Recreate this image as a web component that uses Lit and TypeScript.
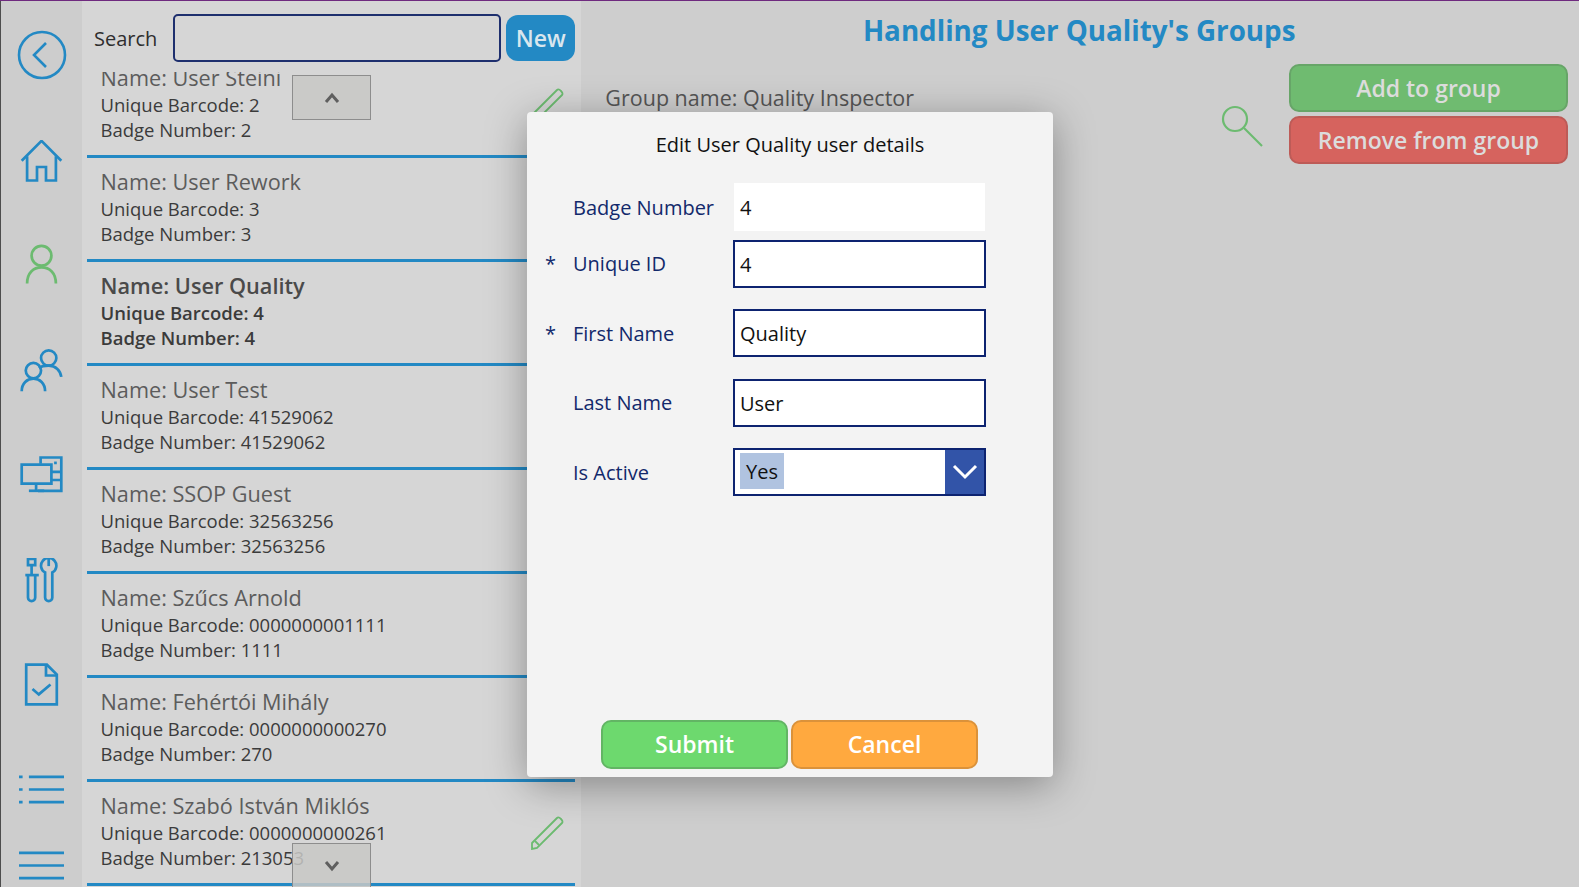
import { html, svg, css, LitElement } from 'lit';
import { customElement } from 'lit/decorators.js';
import { classMap } from 'lit/directives/class-map.js';

const USERS = [
  { name: 'User Steini', barcode: '2', badge: '2' },
  { name: 'User Rework', barcode: '3', badge: '3' },
  { name: 'User Quality', barcode: '4', badge: '4', selected: true },
  { name: 'User Test', barcode: '41529062', badge: '41529062' },
  { name: 'SSOP Guest', barcode: '32563256', badge: '32563256' },
  { name: 'Szűcs Arnold', barcode: '0000000001111', badge: '1111' },
  { name: 'Fehértói Mihály', barcode: '0000000000270', badge: '270' },
  { name: 'Szabó István Miklós', barcode: '0000000000261', badge: '213053' },
];

const FIELDS = [
  { label: 'Unique ID', value: '4', required: true },
  { label: 'First Name', value: 'Quality', required: true },
  { label: 'Last Name', value: 'User', required: false },
];

const NAV_ICONS = [
  svg`<circle cx="25" cy="25" r="23"/><path d="M29 13 L17 25 L29 37"/>`,
  svg`<path d="M3 23 L25 1 L47 23"/><path d="M9 18 V45 H20 V30 H30 V45 H41 V18"/>`,
  svg`<g class="green"><circle cx="25" cy="13" r="11"/><path d="M9 44 C9 32 16 26 25 26 C34 26 41 32 41 44"/></g>`,
  svg`<circle cx="33" cy="10" r="8.5"/><path d="M22 21 C25 19 29 18.5 33 18.5 C41 18.5 46 24 47 31"/><circle cx="16" cy="24" r="8.5"/><path d="M3 47 C3 38 9 33 16 33 C23 33 29 38 29 47"/>`,
  svg`<path d="M24 12 V5 H47 V42 H21"/><path d="M3 13 H36 V34 H3 Z"/><path d="M19 34 V42"/><path d="M11 42 H28"/><path d="M36 21 H47 M36 30 H47"/><path d="M39 11 H42"/>`,
  svg`<path d="M10 1 H18 V8 H10 Z"/><path d="M14 8 V19"/><path d="M7 19 H22"/><path d="M10 19 V44 A4 4 0 0 0 18 44 V19"/><path d="M29 16 A8.5 8.5 0 1 1 37 16 V44 A4 4 0 0 1 29 44 Z"/><path d="M33 1 V9"/>`,
  svg`<path d="M8 3 H31 L42 14 V47 H8 Z"/><path d="M30 3 V15 H42"/><path d="M15 30 L22 36 L35 25"/>`,
  svg`<path d="M0 11 H4 M0 25 H4 M0 39 H4"/><path d="M11 11 H50 M11 25 H50 M11 39 H50"/>`,
  svg`<path d="M0 11 H50 M0 25 H50 M0 39 H50"/>`,
];

@customElement('app-root')
export class AppRoot extends LitElement {
  static styles = css`
    :host {
      display: block;
      width: 1579px;
      height: 887px;
      font-family: "Open Sans", sans-serif;
      overflow: hidden;
    }

    * {
      box-sizing: border-box;
    }

    .screen {
      position: relative;
      display: flex;
      height: 887px;
      border-top: 1px solid #6f2a7f;
      background: #cecece;
    }

    /* Left nav */
    .nav {
      flex: 0 0 82px;
      display: flex;
      flex-direction: column;
      padding-top: 8px;
      border-left: 1px solid #4d4d4d;
      background: #cdcdcd;
    }

    .nav-item {
      flex: 0 0 104.6px;
      display: flex;
      justify-content: center;
      padding-top: 23.5px;
    }

    .nav-item svg {
      width: 45px;
      height: 45px;
      fill: none;
      stroke: #2389c4;
      stroke-width: 3;
    }

    .nav-item .green {
      stroke: #6cbb70;
    }

    .nav-item.back {
      flex-basis: 107px;
      padding-top: 21px;
    }

    .nav-item.back svg {
      width: 50px;
      height: 50px;
      stroke-width: 2.6;
    }

    .nav-item.last {
      flex-basis: 76px;
    }

    /* User list */
    .list-panel {
      position: relative;
      flex: 0 0 499px;
      display: flex;
      flex-direction: column;
      background: #d6d6d6;
    }

    .search {
      flex: 0 0 71px;
      display: flex;
      align-items: center;
      padding: 3px 6px 0 12px;
      font-size: 20px;
      color: #2e2e2e;
    }

    .search-input {
      width: 328px;
      height: 48px;
      margin: 0 5px 0 16px;
      border: 2px solid #1e2f6e;
      border-radius: 5px;
    }

    .new {
      width: 69px;
      height: 46px;
      border-radius: 12px;
      background: #2389c4;
      color: #d9e6ee;
      font-size: 23px;
      font-weight: 600;
      line-height: 46px;
      text-align: center;
    }

    .rows {
      flex: 1;
      min-height: 0;
      overflow: hidden;
      padding: 0 6px 0 5px;
    }

    .row {
      position: relative;
      height: 104px;
      padding: 9px 0 0 13.5px;
      border-bottom: 3px solid #2389c4;
      color: #3b3b3b;
      font-size: 18.5px;
      line-height: 25px;
    }

    .row:first-child {
      margin-top: -18px;
    }

    .row .name {
      margin-bottom: -1px;
      color: #5c5c5c;
      font-size: 21.7px;
      line-height: 30px;
    }

    .row.selected {
      font-weight: 600;
    }

    .row.selected .name {
      color: #4a4a4a;
    }

    .pencil {
      position: absolute;
      right: 10px;
      top: 34px;
      width: 34px;
      height: 34px;
      fill: none;
      stroke: #6cbb70;
      stroke-width: 1.8;
    }

    .scroll-btn {
      position: absolute;
      left: 210px;
      width: 79px;
      height: 45px;
      display: flex;
      align-items: center;
      justify-content: center;
      border: 1px solid #8d8d8d;
      background: rgba(200, 200, 198, 0.85);
    }

    .scroll-btn svg {
      width: 16px;
      height: 12px;
      fill: none;
      stroke: #5f5f5f;
      stroke-width: 3;
    }

    .scroll-btn.up {
      top: 74px;
    }

    .scroll-btn.down {
      bottom: -1px;
    }

    /* Right side */
    .detail {
      position: relative;
      flex: 1;
    }

    .title {
      margin: 0;
      padding: 10px 2px 0 0;
      color: #2389c4;
      font-size: 27.75px;
      font-weight: 700;
      line-height: 38px;
      text-align: center;
    }

    .detail-body {
      display: flex;
      align-items: flex-start;
      padding: 15px 11px 0 24px;
    }

    .group {
      flex: 1;
      padding-top: 19px;
      color: #555;
      font-size: 21.5px;
      line-height: 30px;
    }

    .magnifier {
      width: 42px;
      height: 42px;
      margin: 41px 26px 0 0;
      fill: none;
      stroke: #6cbb70;
      stroke-width: 2.2;
    }

    .actions {
      display: flex;
      flex-direction: column;
      gap: 4px;
      width: 279px;
    }

    .action {
      height: 48px;
      border: 2px solid;
      border-radius: 10px;
      color: #dcdcdc;
      font-size: 23px;
      font-weight: 600;
      line-height: 44px;
      text-align: center;
    }

    .action.add {
      background: #6fbb70;
      border-color: #67a568;
    }

    .action.remove {
      background: #d6635e;
      border-color: #bd5b57;
    }

    /* Modal */
    .modal {
      position: absolute;
      left: 527px;
      top: 111px;
      width: 526px;
      height: 665px;
      display: flex;
      flex-direction: column;
      border-radius: 4px;
      background: #f3f3f3;
      box-shadow: 0 8px 40px rgba(0, 0, 0, 0.35);
    }

    .modal-title {
      padding: 19px 0 0 0;
      color: #111;
      font-size: 20px;
      line-height: 28px;
      text-align: center;
    }

    .form {
      display: flex;
      flex-direction: column;
      gap: 21.5px;
      padding-top: 24px;
    }

    .form-row {
      display: flex;
      align-items: center;
      height: 48px;
      color: #12296b;
      font-size: 20px;
    }

    .form-row.first {
      margin-bottom: -13px;
    }

    .star {
      width: 46px;
      padding-left: 18px;
      font-size: 20px;
    }

    .label {
      width: 160px;
    }

    .input {
      width: 253px;
      height: 48px;
      padding-left: 5px;
      border: 2px solid #0d2370;
      background: #fff;
      color: #111;
      font-size: 20px;
      line-height: 46px;
    }

    .input.plain {
      border-color: transparent;
      width: 251px;
      margin-left: 1px;
      padding-left: 4px;
    }

    .select {
      display: flex;
      align-items: stretch;
      padding: 0;
    }

    .select-value {
      flex: 1;
      padding: 3px 0 3px 5px;
    }

    .chip {
      display: inline-block;
      height: 36px;
      padding: 0 6px;
      background: #b0c3e0;
      line-height: 38px;
      vertical-align: top;
    }

    .chevron {
      width: 39px;
      display: flex;
      align-items: center;
      justify-content: center;
      background: #3254a8;
    }

    .chevron svg {
      width: 26px;
      height: 16px;
      fill: none;
      stroke: #fff;
      stroke-width: 3;
    }

    .modal-actions {
      display: flex;
      justify-content: center;
      gap: 3px;
      margin-top: auto;
      padding: 0 1px 8px 0;
    }

    .modal-btn {
      width: 187px;
      height: 49px;
      border: 2px solid;
      border-radius: 10px;
      color: #fff;
      font-size: 23px;
      font-weight: 600;
      line-height: 45px;
      text-align: center;
    }

    .modal-btn.submit {
      background: #6dd96e;
      border-color: #62b564;
    }

    .modal-btn.cancel {
      background: #ffa93f;
      border-color: #db923a;
    }
  `;

  renderRow(user: (typeof USERS)[number]) {
    return html`
      <div class=${classMap({ row: true, selected: !!user.selected })}>
        <div class="name">Name: ${user.name}</div>
        <div>Unique Barcode: ${user.barcode}</div>
        <div>Badge Number: ${user.badge}</div>
        <svg class="pencil" viewBox="0 0 34 34">
          <path d="M1 27 L26 2 C28 0 33 5 31 7 L6 32 L1 33 Z" />
          <path d="M4 25 L8 29" />
        </svg>
      </div>
    `;
  }

  render() {
    return html`
      <div class="screen">
        <nav class="nav">
          ${NAV_ICONS.map(
            (icon, i) => html`
              <div class=${classMap({ 'nav-item': true, back: i === 0, last: i === 7 })}>
                <svg viewBox="0 0 50 50">${icon}</svg>
              </div>
            `
          )}
        </nav>

        <section class="list-panel">
          <div class="search">
            <span>Search</span>
            <div class="search-input"></div>
            <div class="new">New</div>
          </div>
          <div class="rows">${USERS.map((user) => this.renderRow(user))}</div>
          <div class="scroll-btn up">
            <svg viewBox="0 0 16 12"><path d="M2 10 L8 3 L14 10" /></svg>
          </div>
          <div class="scroll-btn down">
            <svg viewBox="0 0 16 12"><path d="M2 2 L8 9 L14 2" /></svg>
          </div>
        </section>

        <section class="detail">
          <h1 class="title">Handling User Quality's Groups</h1>
          <div class="detail-body">
            <div class="group">Group name: Quality Inspector</div>
            <svg class="magnifier" viewBox="0 0 42 42">
              <circle cx="14" cy="14" r="12" />
              <path d="M23 23 L41 41" />
            </svg>
            <div class="actions">
              <div class="action add">Add to group</div>
              <div class="action remove">Remove from group</div>
            </div>
          </div>
        </section>

        <div class="modal">
          <div class="modal-title">Edit User Quality user details</div>
          <div class="form">
            <div class="form-row first">
              <span class="star"></span>
              <span class="label">Badge Number</span>
              <div class="input plain">4</div>
            </div>
            ${FIELDS.map(
              (field) => html`
                <div class="form-row">
                  <span class="star">${field.required ? '*' : ''}</span>
                  <span class="label">${field.label}</span>
                  <div class="input">${field.value}</div>
                </div>
              `
            )}
            <div class="form-row">
              <span class="star"></span>
              <span class="label">Is Active</span>
              <div class="input select">
                <div class="select-value"><span class="chip">Yes</span></div>
                <div class="chevron">
                  <svg viewBox="0 0 26 16"><path d="M2 2 L13 13 L24 2" /></svg>
                </div>
              </div>
            </div>
          </div>
          <div class="modal-actions">
            <div class="modal-btn submit">Submit</div>
            <div class="modal-btn cancel">Cancel</div>
          </div>
        </div>
      </div>
    `;
  }
}
